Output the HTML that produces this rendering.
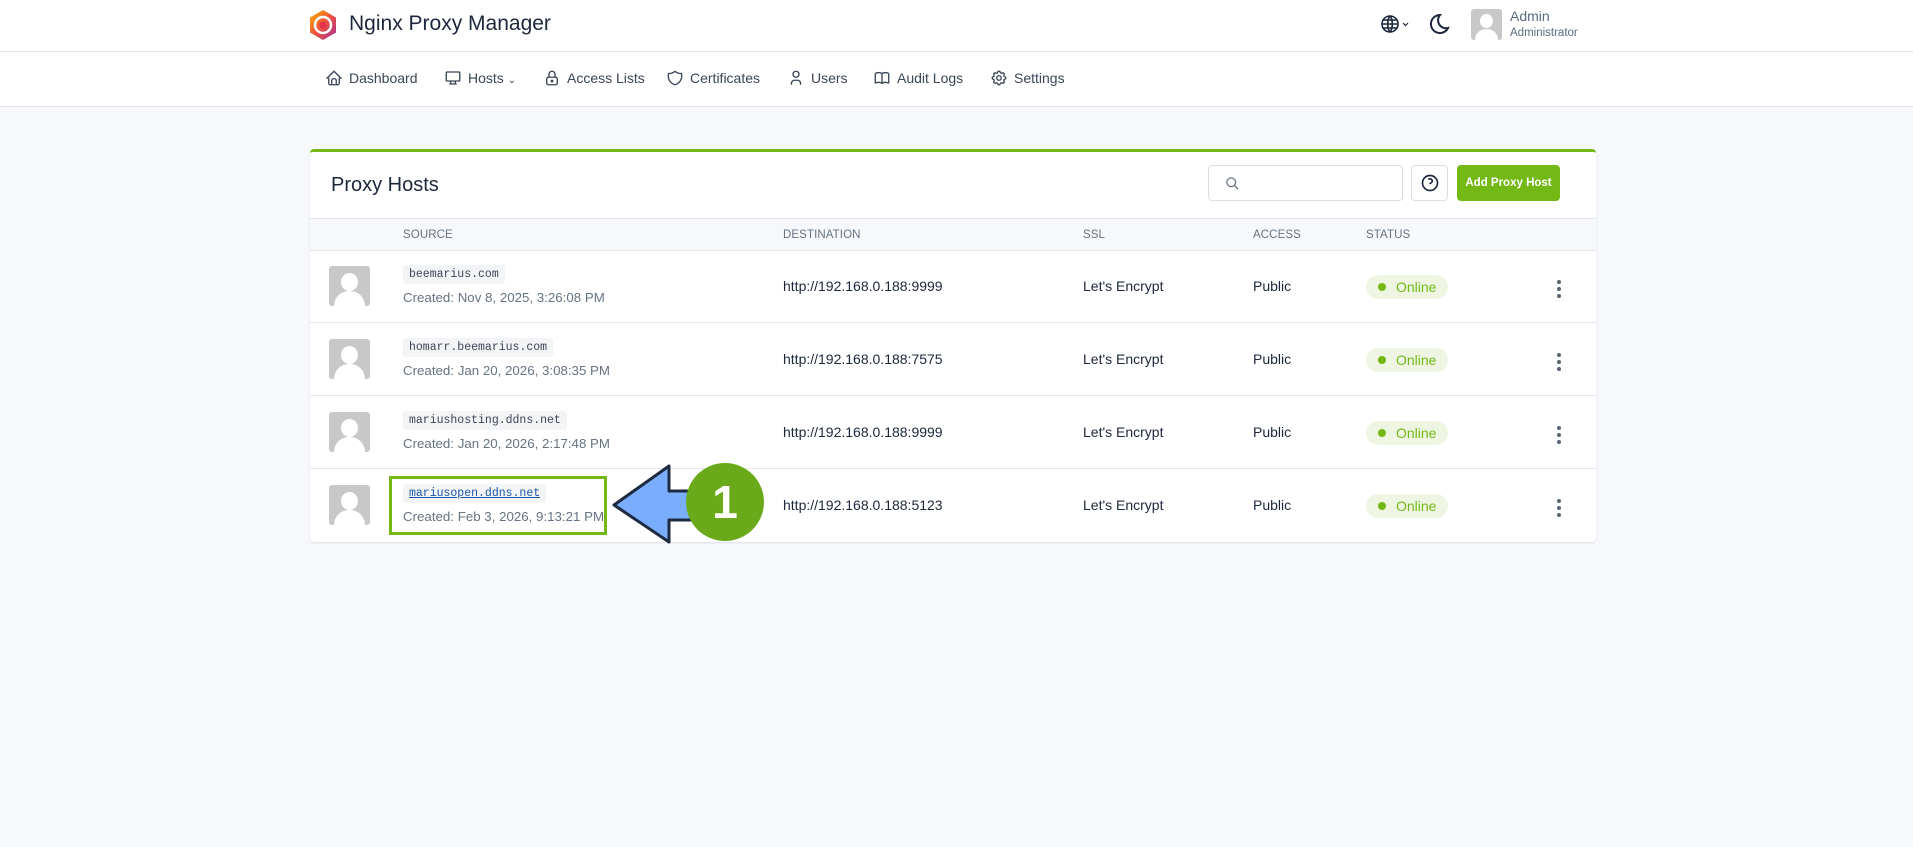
<!DOCTYPE html>
<html><head><meta charset="utf-8"><style>
*{box-sizing:border-box;margin:0;padding:0}
body{width:1913px;height:847px;background:#f6f8fb;font-family:"Liberation Sans",sans-serif;color:#1d273b;position:relative;overflow:hidden}
.top{position:absolute;left:0;top:0;width:1913px;height:52px;background:#fff;border-bottom:1px solid #e3e6ea}
.nav{position:absolute;left:0;top:52px;width:1913px;height:55px;background:#fff;border-bottom:1px solid #e3e6ea}
.a{position:absolute}
.ni{position:absolute;top:70px;font-size:14px;color:#3a4556}
.ni svg{position:absolute;left:-24px;top:-1px}
.card{position:absolute;left:310px;top:149px;width:1286px;height:393px;background:#fff;border-top:3px solid #74b816;border-radius:4px;box-shadow:0 1px 2px rgba(0,0,0,.1)}
.th{position:absolute;left:0;top:66px;width:100%;height:33px;background:#f6f8fb;border-top:1px solid #e3e6ea;border-bottom:1px solid #e3e6ea}
.th span{position:absolute;top:10px;font-size:11.5px;color:#667382;letter-spacing:.1px}
.row{position:absolute;left:0;width:100%;height:73px;border-bottom:1px solid #e6e8eb}
.av{position:absolute;left:19px;top:16px;width:41px;height:40px;background:#c8c8c8;border-radius:3px;overflow:hidden}
.code{position:absolute;left:93px;top:15px;height:19px;padding:0 6px;background:#f3f4f6;border-radius:3px;font-family:"Liberation Mono",monospace;font-size:11.5px;line-height:19px;color:#3a4556}
.cr{position:absolute;left:93px;top:40px;font-size:13.3px;color:#667382}
.cell{position:absolute;top:28px;font-size:14px;color:#1d273b}
.on{position:absolute;left:1056px;top:25px;width:82px;height:24px;border-radius:12px;background:#eef6e3;color:#74b816;font-size:14px;line-height:24px;padding-left:30px}
.on:before{content:"";position:absolute;left:12px;top:8px;width:8px;height:8px;border-radius:50%;background:#74b816}
.keb{position:absolute;left:1247px;top:30px;width:4px}
.keb i{display:block;width:4px;height:4px;border-radius:50%;background:#5a6472;margin-bottom:3px}
</style></head><body>
<div class="top"></div><div class="nav"></div>
<svg class="a" style="left:309px;top:9px" width="28" height="32" viewBox="0 0 28 32"><defs><linearGradient id="g" x1="0" y1="0" x2="1" y2="1"><stop offset="0" stop-color="#f5b700"/><stop offset=".5" stop-color="#f0503c"/><stop offset="1" stop-color="#a0309a"/></linearGradient></defs><polygon points="14,1 27,8.5 27,23.5 14,31 1,23.5 1,8.5" fill="url(#g)"/><circle cx="14" cy="16" r="8" fill="none" stroke="#fff" stroke-width="2.5"/><circle cx="14" cy="16" r="3.5" fill="#e0334b"/></svg>
<div class="a" style="left:349px;top:12px;font-size:21px;color:#1d273b">Nginx Proxy Manager</div>
<svg class="a" style="left:1380px;top:14px" width="20" height="20" viewBox="0 0 20 20" fill="none" stroke="#1d273b" stroke-width="1.6"><circle cx="10" cy="10" r="8"/><path d="M2 10h16M10 2c-3 3-3 13 0 16M10 2c3 3 3 13 0 16M3.5 6h13M3.5 14h13"/></svg>
<svg class="a" style="left:1402px;top:22px" width="7" height="5" viewBox="0 0 7 5" fill="none" stroke="#1d273b" stroke-width="1.2"><path d="M1 1l2.5 2.5L6 1"/></svg>
<svg class="a" style="left:1428px;top:12px" width="22" height="24" viewBox="0 0 22 24" fill="none" stroke="#1d273b" stroke-width="2"><path d="M12 3a9 9 0 1 0 8 13A8 8 0 0 1 12 3z"/></svg>
<div class="a" style="left:1471px;top:9px;width:31px;height:31px;background:#c8c8c8;border-radius:3px;overflow:hidden"><div class="a" style="left:9px;top:5px;width:13px;height:14px;border-radius:50%;background:#fff"></div><div class="a" style="left:4px;top:20px;width:23px;height:16px;border-radius:11px 11px 0 0;background:#fff"></div></div>
<div class="a" style="left:1510px;top:8px;font-size:14px;color:#5a6b82">Admin</div>
<div class="a" style="left:1510px;top:27px;font-size:11.5px;color:#5a6b82">Administrator</div>

<div class="ni" style="left:349px"><svg width="18" height="18" viewBox="0 0 24 24" fill="none" stroke="#3a4556" stroke-width="1.8"><path d="M5 12H3l9-9 9 9h-2M5 12v7a2 2 0 0 0 2 2h10a2 2 0 0 0 2-2v-7M9 21v-6a2 2 0 0 1 2-2h2a2 2 0 0 1 2 2v6"/></svg>Dashboard</div>
<div class="ni" style="left:468px"><svg width="18" height="18" viewBox="0 0 24 24" fill="none" stroke="#3a4556" stroke-width="1.8"><rect x="3" y="4" width="18" height="12" rx="1"/><path d="M7 20h10M9 16v4M15 16v4"/></svg>Hosts <span style="font-size:10px">&#8964;</span></div>
<div class="ni" style="left:567px"><svg width="18" height="18" viewBox="0 0 24 24" fill="none" stroke="#3a4556" stroke-width="1.8"><rect x="5" y="11" width="14" height="10" rx="2"/><circle cx="12" cy="16" r="1"/><path d="M8 11V7a4 4 0 0 1 8 0v4"/></svg>Access Lists</div>
<div class="ni" style="left:690px"><svg width="18" height="18" viewBox="0 0 24 24" fill="none" stroke="#3a4556" stroke-width="1.8"><path d="M12 3a12 12 0 0 0 8.5 3A12 12 0 0 1 12 21 12 12 0 0 1 3.5 6 12 12 0 0 0 12 3"/></svg>Certificates</div>
<div class="ni" style="left:811px"><svg width="18" height="18" viewBox="0 0 24 24" fill="none" stroke="#3a4556" stroke-width="1.8"><circle cx="12" cy="7" r="4"/><path d="M6 21v-2a4 4 0 0 1 4-4h4a4 4 0 0 1 4 4v2"/></svg>Users</div>
<div class="ni" style="left:897px"><svg width="18" height="18" viewBox="0 0 24 24" fill="none" stroke="#3a4556" stroke-width="1.8"><path d="M3 19a9 9 0 0 1 9 0 9 9 0 0 1 9 0M3 6a9 9 0 0 1 9 0 9 9 0 0 1 9 0M3 6v13M12 6v13M21 6v13"/></svg>Audit Logs</div>
<div class="ni" style="left:1014px"><svg width="18" height="18" viewBox="0 0 24 24" fill="none" stroke="#3a4556" stroke-width="1.8"><path d="M10.3 4.3c.4-1.8 3-1.8 3.4 0a1.7 1.7 0 0 0 2.6 1.1c1.5-.9 3.300.8 2.4 2.4a1.7 1.7 0 0 0 1 2.5c1.8.4 1.8 3 0 3.4a1.7 1.7 0 0 0-1 2.6c.9 1.5-.9 3.3-2.4 2.4a1.7 1.7 0 0 0-2.600 1c-.4 1.8-3 1.8-3.4 0a1.7 1.7 0 0 0-2.6-1c-1.5.9-3.3-.9-2.4-2.4a1.7 1.7 0 0 0-1-2.6c-1.8-.4-1.8-3 0-3.4a1.7 1.7 0 0 0 1-2.5c-.9-1.6.9-3.3 2.4-2.4a1.7 1.7 0 0 0 2.6-1.1"/><circle cx="12" cy="12" r="3"/></svg>Settings</div>

<div class="card">
<div class="a" style="left:21px;top:22px;font-size:20px;color:#1d273b">Proxy Hosts</div>
<div class="a" style="left:898px;top:13px;width:195px;height:36px;border:1px solid #dadfe5;border-radius:4px"><svg class="a" style="left:16px;top:10px" width="15" height="15" viewBox="0 0 24 24" fill="none" stroke="#667382" stroke-width="2"><circle cx="10" cy="10" r="7"/><path d="M21 21l-6-6"/></svg></div>
<div class="a" style="left:1101px;top:13px;width:37px;height:36px;border:1px solid #dadfe5;border-radius:4px"><svg class="a" style="left:8px;top:7px" width="20" height="20" viewBox="0 0 24 24" fill="none" stroke="#1d273b" stroke-width="2"><circle cx="12" cy="12" r="9"/><path d="M12 17v.01M12 13.5a1.5 1.5 0 0 1 1-1.5 2.6 2.6 0 1 0-3-4"/></svg></div>
<div class="a" style="left:1147px;top:13px;width:103px;height:36px;background:#74b816;border-radius:4px;color:#fff;font-size:11.5px;font-weight:bold;line-height:37px;text-align:center">Add Proxy Host</div>
<div class="th"><span style="left:93px">SOURCE</span><span style="left:473px">DESTINATION</span><span style="left:773px">SSL</span><span style="left:943px">ACCESS</span><span style="left:1056px">STATUS</span></div>
</div>
<div class="a" style="left:310px;top:250px;width:1286px;height:292px">
<div class="row" style="top:0"><div class="av"><div class="a" style="left:12px;top:7px;width:17px;height:18px;border-radius:50%;background:#fff"></div><div class="a" style="left:5px;top:25px;width:31px;height:22px;border-radius:15px 15px 0 0;background:#fff"></div></div><div class="code">beemarius.com</div><div class="cr">Created: Nov 8, 2025, 3:26:08 PM</div><div class="cell" style="left:473px">http://192.168.0.188:9999</div><div class="cell" style="left:773px">Let's Encrypt</div><div class="cell" style="left:943px">Public</div><div class="on">Online</div><div class="keb"><i></i><i></i><i></i></div></div>
<div class="row" style="top:73px"><div class="av"><div class="a" style="left:12px;top:7px;width:17px;height:18px;border-radius:50%;background:#fff"></div><div class="a" style="left:5px;top:25px;width:31px;height:22px;border-radius:15px 15px 0 0;background:#fff"></div></div><div class="code">homarr.beemarius.com</div><div class="cr">Created: Jan 20, 2026, 3:08:35 PM</div><div class="cell" style="left:473px">http://192.168.0.188:7575</div><div class="cell" style="left:773px">Let's Encrypt</div><div class="cell" style="left:943px">Public</div><div class="on">Online</div><div class="keb"><i></i><i></i><i></i></div></div>
<div class="row" style="top:146px"><div class="av"><div class="a" style="left:12px;top:7px;width:17px;height:18px;border-radius:50%;background:#fff"></div><div class="a" style="left:5px;top:25px;width:31px;height:22px;border-radius:15px 15px 0 0;background:#fff"></div></div><div class="code">mariushosting.ddns.net</div><div class="cr">Created: Jan 20, 2026, 2:17:48 PM</div><div class="cell" style="left:473px">http://192.168.0.188:9999</div><div class="cell" style="left:773px">Let's Encrypt</div><div class="cell" style="left:943px">Public</div><div class="on">Online</div><div class="keb"><i></i><i></i><i></i></div></div>
<div class="row" style="top:219px;border-bottom:none"><div class="av"><div class="a" style="left:12px;top:7px;width:17px;height:18px;border-radius:50%;background:#fff"></div><div class="a" style="left:5px;top:25px;width:31px;height:22px;border-radius:15px 15px 0 0;background:#fff"></div></div><div class="code" style="color:#1a56a8;text-decoration:underline">mariusopen.ddns.net</div><div class="cr">Created: Feb 3, 2026, 9:13:21 PM</div><div class="cell" style="left:473px">http://192.168.0.188:5123</div><div class="cell" style="left:773px">Let's Encrypt</div><div class="cell" style="left:943px">Public</div><div class="on">Online</div><div class="keb"><i></i><i></i><i></i></div></div>
</div>
<div class="a" style="left:389px;top:476px;width:218px;height:59px;border:3px solid #74b816"></div>
<svg class="a" style="left:610px;top:462px" width="160" height="82" viewBox="0 0 160 82"><path d="M4 43 L59 4 L59 29 L110 29 L110 58 L59 58 L59 80 Z" fill="#7aaefc" stroke="#1d2a40" stroke-width="3" stroke-linejoin="round"/><circle cx="115" cy="40" r="39" fill="#6aaa1a"/><text x="115" y="56" text-anchor="middle" font-family="Liberation Sans,sans-serif" font-weight="bold" font-size="46" fill="#fff">1</text></svg>
</body></html>
